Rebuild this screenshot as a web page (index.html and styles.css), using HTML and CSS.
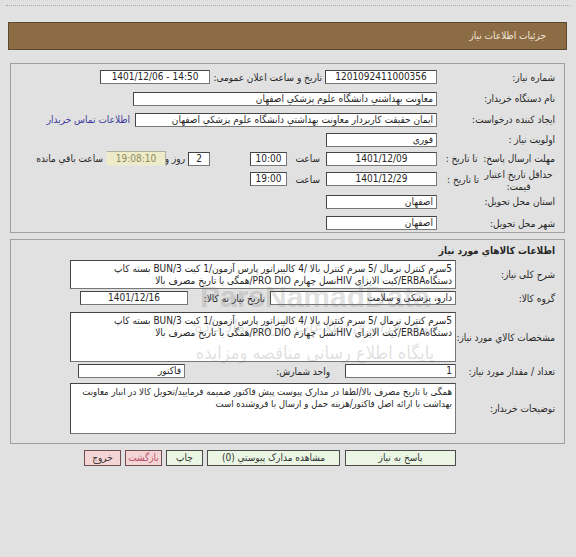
FILE: index.html
```html
<!DOCTYPE html>
<html lang="fa" dir="rtl">
<head>
<meta charset="utf-8">
<title>جزئیات اطلاعات نیاز</title>
<link rel="stylesheet" href="styles.css">
</head>
<body>
<div class="topline"></div>
<div class="header">جزئیات اطلاعات نیاز</div>

<div class="box box1">
  <div class="row r1">
    <div class="lbl">شماره نیاز:</div>
    <div class="inp w112 center">1201092411000356</div>
    <div class="lbl2">تاریخ و ساعت اعلان عمومی:</div>
    <div class="inp w110 center" dir="ltr">1401/12/06 - 14:50</div>
  </div>
  <div class="row r2">
    <div class="lbl">نام دستگاه خریدار:</div>
    <div class="inp w304">معاونت بهداشتي دانشگاه علوم پزشكي اصفهان</div>
  </div>
  <div class="row r3">
    <div class="lbl">ایجاد کننده درخواست:</div>
    <div class="inp w302">ایمان حقیقت کاربردار معاونت بهداشتي دانشگاه علوم پزشكي اصفهان</div>
    <a class="link" href="#">اطلاعات تماس خریدار</a>
  </div>
  <div class="row r4">
    <div class="lbl">اولویت نیاز :</div>
    <div class="inp w111">فوری</div>
  </div>
  <div class="row r5">
    <div class="lbl">مهلت ارسال پاسخ:&nbsp; تا تاریخ :</div>
    <div class="inp w111 center">1401/12/09</div>
    <div class="tlbl">ساعت</div>
    <div class="inp w37 center">10:00</div>
    <div class="inp w22 center days">2</div>
    <div class="dlbl">روز و</div>
    <div class="timer">19:08:10</div>
    <div class="rlbl">ساعت باقي مانده</div>
  </div>
  <div class="row r6">
    <div class="lbl split">
      <span class="two">حداقل تاریخ اعتبار<br>قیمت:</span>
      <span class="to">تا تاریخ :</span>
    </div>
    <div class="inp w111 center">1401/12/29</div>
    <div class="tlbl">ساعت</div>
    <div class="inp w37 center">19:00</div>
  </div>
  <div class="row r7">
    <div class="lbl">استان محل تحویل:</div>
    <div class="inp w111">اصفهان</div>
  </div>
  <div class="row r8">
    <div class="lbl">شهر محل تحویل:</div>
    <div class="inp w111">اصفهان</div>
  </div>
</div>

<div class="box box2">
  <div class="title">اطلاعات کالاهاي مورد نياز</div>
  <div class="row2 g1">
    <div class="lbl3">شرح کلی نیاز:</div>
    <div class="area h29">5سرم کنترل نرمال /5 سرم کنترل بالا /4 کالیبراتور پارس آزمون/1 کیت BUN/3 بسته کاپ<br>دستگاهERBA/کیت الایزای HIVنسل چهارم PRO DIO/همگی با تاریخ مصرف بالا</div>
  </div>
  <div class="row2 g2">
    <div class="lbl3">گروه کالا:</div>
    <div class="inp w186">دارو، پزشکی و سلامت</div>
    <div class="nlbl">تاریخ نیاز به کالا:</div>
    <div class="inp w108 center">1401/12/16</div>
  </div>
  <div class="row2 g3">
    <div class="lbl3">مشخصات کالاي مورد نیاز:</div>
    <div class="area h50">5سرم کنترل نرمال /5 سرم کنترل بالا /4 کالیبراتور پارس آزمون/1 کیت BUN/3 بسته کاپ<br>دستگاهERBA/کیت الایزای HIVنسل چهارم PRO DIO/همگی با تاریخ مصرف بالا</div>
  </div>
  <div class="row2 g4">
    <div class="lbl3">تعداد / مقدار مورد نیاز:</div>
    <div class="inp w111">1</div>
    <div class="ulbl">واحد شمارش:</div>
    <div class="inp w107">فاکتور</div>
  </div>
  <div class="row2 g5">
    <div class="lbl3">توضیحات خریدار:</div>
    <div class="area h51">همگی با تاریخ مصرف بالا/لطفا در مدارک پیوست پیش فاکتور ضمیمه فرمایید/تحویل کالا در انبار معاونت<br>بهداشت با ارائه اصل فاکتور/هزینه حمل و ارسال با فروشنده است</div>
  </div>
</div>

<div class="buttons">
  <button class="btn ok b111">پاسخ به نیاز</button>
  <button class="btn ok b133">مشاهده مدارک پیوستي (0)</button>
  <button class="btn ok b37">چاپ</button>
  <button class="btn bad b37 back">بازگشت</button>
  <button class="btn bad b37">خروج</button>
</div>

<div class="watermark">
  <div class="wm-en">ParsNamadData</div>
  <div class="wm-fa1">مرکز فراوری اطلاعات پارس نماد داده</div>
  <div class="wm-fa2">پایگاه اطلاع رسانی مناقصه ومزایده</div>
</div>
</body>
</html>
```

FILE: styles.css
```css
* { box-sizing: border-box; }
html, body { margin: 0; padding: 0; }
body {
  background: #e1e1e1;
  font-family: "DejaVu Sans Condensed", "DejaVu Sans", sans-serif;
  font-size: 10px;
  color: #262626;
  direction: rtl;
  width: 576px;
  height: 557px;
  overflow: hidden;
  position: relative;
}
.topline {
  margin: 5px 6px 0 6px;
  border-top: 1px dotted #a8a8a8;
}
.header {
  margin: 16px 9px 0 8px;
  height: 28px;
  background: #8c6c44;
  border: 1px solid #5e4a30;
  color: #f1e8d8;
  padding-right: 20px;
  line-height: 26px;
  font-size: 10px;
}
.box {
  border: 1px solid #a0a0a0;
  margin-left: 10px;
  margin-right: 11px;
  padding-right: 9px;
}
.box1 { margin-top: 13px; padding-top: 2px; height: 170px; }
.row { display: flex; align-items: center; }
.r1 { height: 22px; }
.r2, .r3 { height: 21px; }
.r4, .r5 { height: 19px; }
.r6 { height: 22px; }
.r7 { height: 23px; }
.r8 { height: 20px; }
.lbl { width: 116px; margin-left: 2px; white-space: nowrap; }
.lbl.split { display: flex; align-items: center; }
.lbl .two { width: 73px; text-align: center; line-height: 12px; margin-top: 3px; }
.lbl .to { width: 43px; padding-right: 3px; }
.inp {
  height: 14px;
  background: #fff;
  border: 1px solid #444;
  border-right-color: #777;
  border-bottom-color: #777;
  line-height: 12px;
  padding: 0 3px;
  white-space: nowrap;
  overflow: hidden;
  font-size: 10px;
}
.center { text-align: center; }
.w112 { width: 112px; }
.w110 { width: 110px; }
.w111 { width: 111px; }
.w304 { width: 304px; }
.w302 { width: 302px; }
.w37 { width: 37px; }
.w22 { width: 22px; }
.w186 { width: 186px; }
.w108 { width: 108px; }
.w107 { width: 107px; }
.lbl2 { width: 115px; padding-right: 3px; white-space: nowrap; }
.link { color: #3a3a9e; text-decoration: none; margin-right: 5px; white-space: nowrap; }
.tlbl { width: 39px; padding-right: 6px; }
.days { margin-right: 40px; }
.dlbl { width: 22px; padding-right: 3px; white-space: nowrap; }
.timer {
  width: 60px;
  height: 15px;
  background: #eeecc8;
  border: 1px solid #b0b0a0;
  border-bottom-color: #e8e8e0;
  border-left-color: #e8e8e0;
  color: #8c8a5e;
  text-align: center;
  line-height: 13px;
}
.rlbl { padding-right: 3px; white-space: nowrap; }

.box2 { margin-top: 6px; padding-top: 2px; height: 205px; }
.title { height: 18px; line-height: 18px; font-weight: bold; }
.row2 { display: flex; align-items: center; }
.lbl3 { width: 99px; white-space: nowrap; }
.area {
  width: 386px;
  background: #fff;
  border: 1px solid #444;
  border-right-color: #777;
  border-bottom-color: #777;
  padding: 2px 3px;
  line-height: 12px;
  white-space: nowrap;
  overflow: hidden;
}
.h29 { height: 29px; }
.h50 { height: 50px; }
.h51 { height: 51px; font-size: 9.6px; }
.g2 { margin-top: 2px; height: 14px; }
.g3 { margin-top: 7px; }
.g4 { margin-top: 2px; height: 14px; }
.g5 { margin-top: 5px; }
.nlbl { width: 82px; padding-right: 5px; white-space: nowrap; }
.ulbl { width: 160px; padding-right: 15px; white-space: nowrap; }

.buttons {
  display: flex;
  gap: 4px;
  margin-top: 6px;
  margin-right: 120px;
}
.btn {
  height: 16px;
  font-family: inherit;
  font-size: 10px;
  padding: 0;
  line-height: 14px;
  border: 1px solid #4a4a4a;
  color: #333;
  cursor: pointer;
}
.ok { background: #eaf6e3; }
.bad { background: #f4d4d4; border-color: #6e5050; }
.back { color: #b8506e; }
.b111 { width: 111px; margin-left: 1px; }
.b133 { width: 133px; }
.b37 { width: 37px; }

.watermark {
  position: absolute;
  left: 160px;
  top: 280px;
  width: 310px;
  pointer-events: none;
  text-align: center;
  white-space: nowrap;
  color: rgba(120, 120, 120, 0.24);
  direction: rtl;
}
.wm-en { font-family: "Liberation Sans", sans-serif; font-weight: bold; font-size: 30px; direction: ltr; }
.wm-fa1 { font-size: 17px; font-style: italic; margin-top: 2px; }
.wm-fa2 { font-size: 18px; margin-top: 6px; }
```
